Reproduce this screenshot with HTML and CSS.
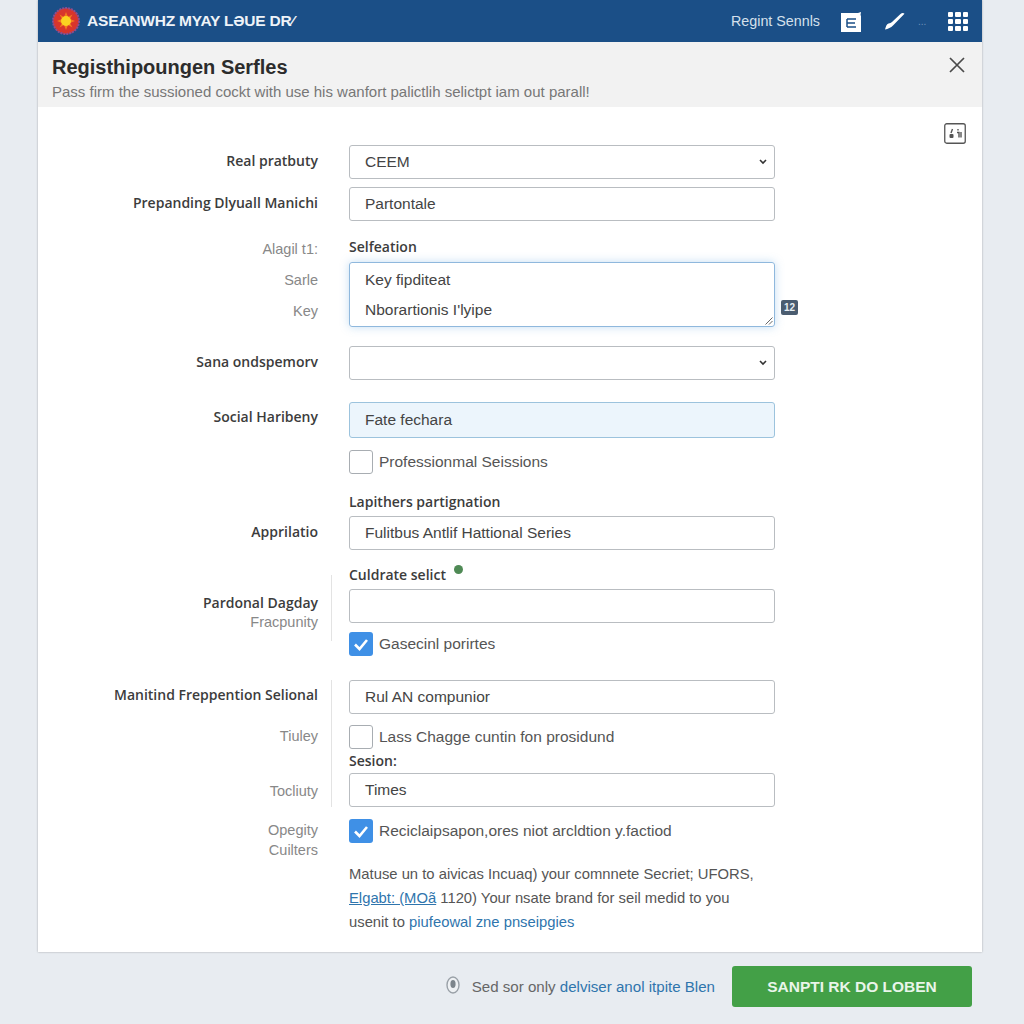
FILE: index.html
```html
<!DOCTYPE html>
<html lang="en">
<head>
  <meta charset="UTF-8">
  <title>Registration Series</title>
  <link rel="stylesheet" href="styles.css">
</head>
<body>
  <div class="panel">
    <header class="topbar">
      <svg class="logo" viewBox="0 0 28 28" width="28" height="28">
        <circle cx="14" cy="14" r="13" fill="#d8352c" stroke="#8a4f92" stroke-width="2" stroke-dasharray="2 1"/>
        <polygon points="14,5 16,10 20.5,7.5 18,12 23,14 18,16 20.5,20.5 16,18 14,23 12,18 7.5,20.5 10,16 5,14 10,12 7.5,7.5 12,10" fill="#f47a1f"/>
        <circle cx="14" cy="14" r="5" fill="#fbd321"/>
      </svg>
      <div class="brand">ASEANWHZ MYAY LƏUE DR⁄</div>
      <div class="top-link">Regint Sennls</div>
      <svg class="ic-doc" viewBox="0 0 21 21" width="21" height="21">
        <path d="M0 2h17l3-1-.5 3 .5 1v16H0z" fill="#fff"/>
        <path d="M6 8h9M6 8v8M6 12h8M6 16h9" stroke="#1b4f87" stroke-width="1.500" fill="none"/>
      </svg>
      <svg class="ic-pen" viewBox="0 0 20 18" width="20" height="18">
        <path d="M0 17.500C1 14 1.500 12 3.500 11.500 5 11 6 11 7 10L15.500 2C17 .8 18.500 .8 19.500 1.800L8 13.500C6 15.500 3 17 0 17.500Z" fill="#fff"/>
      </svg>
      <div class="top-dots">...</div>
      <div class="ic-grid"><i></i><i></i><i></i><i></i><i></i><i></i><i></i><i></i><i></i></div>
    </header>

    <div class="subhead">
      <div class="subhead-text">
        <h1>Registhipoungen Serfles</h1>
        <p>Pass firm the sussioned cockt with use his wanfort palictlih selictpt iam out parall!</p>
      </div>
      <svg class="ic-close" viewBox="0 0 16 16" width="16" height="16">
        <path d="M1 1l14 14M15 1L1 15" stroke="#4a4a4a" stroke-width="1.700" fill="none"/>
      </svg>
    </div>

    <div class="form">
      <div class="tools">
        <svg viewBox="0 0 22 21" width="22" height="21">
          <rect x=".75" y=".75" width="20.500" height="19.500" rx="2" fill="#fff" stroke="#555" stroke-width="1.300"/>
          <path d="M8.500 6l-1.500 4M14 6v1.500M13 9.500h2v5M17 9v5.500" stroke="#555" stroke-width="1.400" fill="none"/>
          <rect x="5.500" y="11" width="4" height="4" rx="1" fill="#555"/>
        </svg>
      </div>

      <div class="row">
        <div class="labels"><div class="lab lab-b mid">Real pratbuty</div></div>
        <div class="col"><div class="field">CEEM<svg class="chev" viewBox="0 0 8 6" width="8" height="6"><path d="M1 1l3 3 3-3" stroke="#333" stroke-width="1.600" fill="none"/></svg></div></div>
      </div>

      <div class="row r2">
        <div class="labels"><div class="lab lab-b mid">Prepanding Dlyuall Manichi</div></div>
        <div class="col"><div class="field">Partontale</div></div>
      </div>

      <div class="row r3">
        <div class="labels l3">
          <div class="lab">Alagil t1:</div>
          <div class="lab">Sarle</div>
          <div class="lab">Key</div>
        </div>
        <div class="col">
          <div class="head">Selfeation</div>
          <div class="area-wrap">
            <div class="area">
              <div>Key fipditeat</div>
              <div>Nborartionis I'lyipe</div>
              <svg class="grip" viewBox="0 0 8 8" width="8" height="8"><path d="M7.500 .5l-7 7M7.500 4l-3.500 3.500" stroke="#666" stroke-width="1" fill="none"/></svg>
            </div>
            <div class="badge">12</div>
          </div>
        </div>
      </div>

      <div class="row r4">
        <div class="labels"><div class="lab lab-b mid">Sana ondspemorv</div></div>
        <div class="col"><div class="field"><svg class="chev" viewBox="0 0 8 6" width="8" height="6"><path d="M1 1l3 3 3-3" stroke="#333" stroke-width="1.600" fill="none"/></svg></div></div>
      </div>

      <div class="row r5">
        <div class="labels"><div class="lab lab-b mid-36">Social Haribeny</div></div>
        <div class="col">
          <div class="field filled">Fate fechara</div>
          <label class="check c-prof"><span class="box"></span>Professionmal Seissions</label>
          <div class="head h-lap">Lapithers partignation</div>
        </div>
      </div>

      <div class="row r6">
        <div class="labels"><div class="lab lab-b mid">Apprilatio</div></div>
        <div class="col"><div class="field">Fulitbus Antlif Hattional Series</div></div>
      </div>

      <div class="row r7">
        <div class="labels ruled l7">
          <div class="lab lab-b">Pardonal Dagday</div>
          <div class="lab">Fracpunity</div>
        </div>
        <div class="col">
          <div class="head">Culdrate selict<span class="dot"></span></div>
          <div class="field f-gap"></div>
          <label class="check c-gas"><span class="box on"><svg viewBox="0 0 24 24" width="24" height="24"><path d="M6 12.500l4.500 4.500L18 8" stroke="#fff" stroke-width="2.600" fill="none"/></svg></span>Gasecinl porirtes</label>
        </div>
      </div>

      <div class="row r8">
        <div class="labels ruled l8">
          <div class="lab lab-b">Manitind Freppention Selional</div>
          <div class="lab">Tiuley</div>
          <div class="lab">Tocliuty</div>
        </div>
        <div class="col">
          <div class="field">Rul AN compunior</div>
          <label class="check c-lass"><span class="box"></span>Lass Chagge cuntin fon prosidund</label>
          <div class="head h-ses">Sesion:</div>
          <div class="field f-times">Times</div>
        </div>
      </div>

      <div class="row r9">
        <div class="labels l9">
          <div class="lab">Opegity</div>
          <div class="lab">Cuilters</div>
        </div>
        <div class="col">
          <label class="check"><span class="box on"><svg viewBox="0 0 24 24" width="24" height="24"><path d="M6 12.500l4.500 4.500L18 8" stroke="#fff" stroke-width="2.600" fill="none"/></svg></span>Reciclaipsapon,ores niot arcldtion y.factiod</label>
          <p class="note">Matuse un to aivicas Incuaq) your comnnete Secriet; UFORS,<br><a class="ul">Elgabt: (MOã</a> 1120) Your nsate brand for seil medid to you<br>usenit to <a>piufeowal zne pnseipgies</a></p>
        </div>
      </div>
    </div>
  </div>

  <footer class="foot">
    <svg class="ic-hint" viewBox="0 0 14 18" width="14" height="18">
      <ellipse cx="7" cy="9" rx="6" ry="8" fill="#eef1f4" stroke="#9aa1a8" stroke-width="1.400"/>
      <ellipse cx="7" cy="8" rx="2.600" ry="4" fill="#7d858c"/>
    </svg>
    <div class="hint">Sed sor only <a>delviser anol itpite Blen</a></div>
    <div class="btn">SANPTI RK DO LOBEN</div>
  </footer>
</body>
</html>
```

FILE: styles.css
```css
html, body {
  margin: 0;
  padding: 0;
}
body {
  background: #e8ecf1;
  font-family: "Liberation Sans", Arial, sans-serif;
  color: #333;
  height: 1024px;
  overflow: hidden;
}
.panel {
  width: 944px;
  height: 952px;
  margin-left: 38px;
  background: #fff;
  box-shadow: 0 0 2px rgba(0,0,0,0.3);
  display: flex;
  flex-direction: column;
}
.topbar {
  height: 42px;
  background: #1b4f87;
  display: flex;
  align-items: center;
  padding-left: 14px;
  padding-right: 14px;
  color: #fff;
  flex: none;
}
.brand {
  margin-left: 7px;
  font-size: 15.500px;
  font-weight: 700;
  letter-spacing: -0.2px;
  white-space: nowrap;
  color: #eef3f8;
}
.top-link {
  margin-left: auto;
  font-size: 14.300px;
  color: #d5e0ec;
}
.ic-doc { margin-left: 21px; }
.ic-pen { margin-left: 23px; }
.top-dots { margin-left: 13px; width: 9px; font-size: 10px; color: #6f93ba; }
.ic-grid {
  margin-left: 21px;
  width: 20px;
  height: 19px;
  display: grid;
  grid-template-columns: repeat(3, 1fr);
  grid-template-rows: repeat(3, 1fr);
  gap: 2px;
}
.ic-grid i { background: #fff; border-radius: 1px; }

.subhead {
  height: 65px;
  background: #f2f2f2;
  flex: none;
  display: flex;
  justify-content: space-between;
  padding: 0 17px 0 14px;
}
.subhead h1 {
  margin: 14px 0 0;
  font-size: 20px;
  line-height: 23px;
  color: #2c2c2c;
}
.subhead p {
  margin: 4px 0 0;
  font-size: 15px;
  line-height: 18px;
  color: #777;
}
.ic-close { margin-top: 15px; }

.form {
  padding-top: 16px;
  flex: 1;
}
.tools {
  display: flex;
  justify-content: flex-end;
  padding-right: 16px;
  height: 21px;
  margin-bottom: 1px;
}
.row {
  display: grid;
  grid-template-columns: 294px 426px;
  column-gap: 17px;
}
.labels {
  padding-right: 14px;
  text-align: right;
}
.lab {
  font-size: 14.500px;
  line-height: 17px;
  color: #888;
  white-space: nowrap;
}
.lab-b {
  font-family: "Open Sans", sans-serif;
  font-weight: 600;
  color: #3c3c3c;
  font-size: 14px;
}
.mid { line-height: 32px; }
.mid-36 { line-height: 30px; }
.ruled { border-right: 1px solid #e3e3e3; padding-right: 13px; }

.head {
  font-family: "Open Sans", sans-serif;
  font-size: 14px;
  font-weight: 600;
  line-height: 16px;
  color: #3c3c3c;
}
.field {
  height: 34px;
  box-sizing: border-box;
  border: 1px solid #b9bdc1;
  border-radius: 3px;
  padding: 0 15px;
  display: flex;
  align-items: center;
  font-size: 15.500px;
  color: #444;
  background: #fff;
}
.chev { margin-left: auto; margin-right: -8px; }
.filled {
  height: 36px;
  background: #ecf5fc;
  border-color: #9cc3dd;
}
.area-wrap {
  position: relative;
  margin-top: 7px;
}
.area {
  height: 65px;
  box-sizing: border-box;
  border: 1px solid #8fb8dd;
  border-radius: 3px;
  box-shadow: 0 0 10px rgba(90,160,220,0.35);
  padding: 2px 15px;
  font-size: 15.500px;
  line-height: 30px;
  color: #444;
  position: relative;
}
.grip {
  position: absolute;
  right: 1px;
  bottom: 1px;
}
.badge {
  position: absolute;
  left: 432px;
  top: 38px;
  width: 17px;
  height: 15px;
  background: #4a5c70;
  border-radius: 2px;
  color: #e6edf3;
  font-size: 10px;
  font-weight: 700;
  line-height: 15px;
  text-align: center;
}
.check {
  display: flex;
  align-items: center;
  font-size: 15.500px;
  color: #555;
  height: 24px;
  white-space: nowrap;
}
.box {
  width: 24px;
  height: 24px;
  box-sizing: border-box;
  border: 1px solid #a8adb2;
  border-radius: 3px;
  margin-right: 6px;
  flex: none;
  background: #fff;
}
.box.on {
  background: #3f90e6;
  border: none;
}
.box svg { display: block; }
.dot {
  display: inline-block;
  width: 9px;
  height: 9px;
  margin: 0 0 6px 8px;
  border-radius: 50%;
  background: #4f8a55;
}
a { color: #2f75ad; }
a.ul {
  text-decoration: underline;
}

.r2 { margin-top: 8px; }
.r3 { margin-top: 18px; }
.l3 { padding-top: 2px; }
.l3 .lab + .lab { margin-top: 14px; }
.r4 { margin-top: 19px; }
.r5 { margin-top: 22px; }
.c-prof { margin-top: 12px; }
.h-lap { margin-top: 20px; }
.r6 { margin-top: 6px; }
.r7 { margin-top: 15px; }
.l7 { margin: 10px 0 15px; padding-top: 19px; }
.l7 .lab + .lab { margin-top: 3px; }
.f-gap { margin-top: 6px; }
.c-gas { margin-top: 9px; }
.r8 { margin-top: 24px; }
.l8 .lab:first-child { margin-top: 6px; }
.l8 .lab:nth-child(2) { margin-top: 25px; }
.l8 .lab:nth-child(3) { margin-top: 38px; }
.c-lass { margin-top: 11px; }
.h-ses { margin-top: 4px; }
.f-times { margin-top: 4px; }
.r9 { margin-top: 12px; }
.l9 .lab:first-child { margin-top: 3px; }
.l9 .lab + .lab { margin-top: 3px; }
.note {
  margin: 19px 0 0;
  font-size: 14.800px;
  line-height: 24px;
  color: #555;
  white-space: nowrap;
}

.foot {
  display: flex;
  justify-content: flex-end;
  align-items: center;
  width: 934px;
  margin: 14px 0 0 38px;
  height: 41px;
}
.ic-hint { margin-right: 12px; margin-top: -4px; }
.hint {
  font-size: 15.100px;
  color: #666;
  margin-right: 17px;
}
.btn {
  width: 240px;
  height: 41px;
  background: #43a047;
  border-radius: 3px;
  color: #e9f5ea;
  font-size: 15.500px;
  font-weight: 700;
  line-height: 41px;
  text-align: center;
}
```
